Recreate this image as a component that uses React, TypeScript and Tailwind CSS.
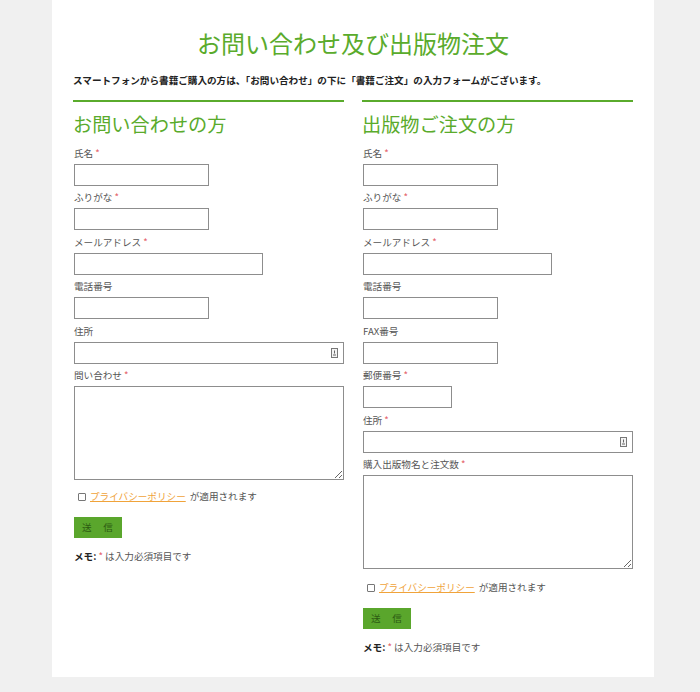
import React from 'react';

type Field = {
  label: string;
  required?: boolean;
  width?: string;
  icon?: boolean;
  textarea?: boolean;
};

const contactFields: Field[] = [
  { label: '氏名', required: true, width: 'w-[135px]' },
  { label: 'ふりがな', required: true, width: 'w-[135px]' },
  { label: 'メールアドレス', required: true, width: 'w-[189px]' },
  { label: '電話番号', width: 'w-[135px]' },
  { label: '住所', width: 'w-full', icon: true },
  { label: '問い合わせ', required: true, textarea: true },
];

const orderFields: Field[] = [
  { label: '氏名', required: true, width: 'w-[135px]' },
  { label: 'ふりがな', required: true, width: 'w-[135px]' },
  { label: 'メールアドレス', required: true, width: 'w-[189px]' },
  { label: '電話番号', width: 'w-[135px]' },
  { label: 'FAX番号', width: 'w-[135px]' },
  { label: '郵便番号', required: true, width: 'w-[89px]' },
  { label: '住所', required: true, width: 'w-full', icon: true },
  { label: '購入出版物名と注文数', required: true, textarea: true },
];

const ContactIcon = () => (
  <svg width="7" height="10" viewBox="0 0 7 10" className="absolute right-[6px] top-[6px]">
    <rect x="0.5" y="0.5" width="6" height="9" fill="#f4f4f4" stroke="#777" />
    <rect x="3" y="2.5" width="1" height="3" fill="#666" />
    <rect x="2" y="6.5" width="3" height="1" fill="#666" />
  </svg>
);

const FormField: React.FC<{ field: Field }> = ({ field }) => (
  <div className="mb-[3.5px]">
    <div className="text-[9.6px] leading-[17px] text-[#555]">
      {field.label}
      {field.required && <span className="text-[#e5636b]"> *</span>}
    </div>
    {field.textarea ? (
      <textarea className="mt-[2px] block h-[94px] w-full resize-y border border-[#8d8d8d] bg-white" />
    ) : (
      <div className={`relative mt-[2px] ${field.width}`}>
        <input type="text" className="block h-[22px] w-full border border-[#8d8d8d] bg-white" />
        {field.icon && <ContactIcon />}
      </div>
    )}
  </div>
);

const FormColumn: React.FC<{ title: string; fields: Field[]; gapAfter: string }> = ({
  title,
  fields,
  gapAfter,
}) => (
  <div className="border-t-2 border-[#5aab2c]">
    <h2 className="mt-[10px] text-[19.2px] leading-[24px] text-[#5aab2c]">{title}</h2>
    <div className="mt-[8.5px] pl-[1px]">
      {fields.map((f, i) => (
        <FormField key={i} field={f} />
      ))}
      <div className={`${gapAfter} flex items-center text-[9.6px] leading-[17px] text-[#555]`}>
        <span className="ml-[4px] mr-[4px] inline-block h-[8px] w-[8px] rounded-[1px] border border-[#777] bg-white" />
        <span className="text-[#f0a33a] underline">プライバシーポリシー</span>
        <span className="ml-[4px]">が適用されます</span>
      </div>
      <button className="mt-[11.5px] block h-[21px] w-[48px] bg-[#5aa62c] text-[9.6px] tracking-[1px] text-[#2c5a12]">
        送　信
      </button>
      <div className="mt-[10px] text-[9.6px] leading-[17px] text-[#555]">
        <span className="font-bold text-[#222]">メモ:</span>
        <span className="text-[#e5636b]"> *</span> は入力必須項目です
      </div>
    </div>
  </div>
);

export default function App() {
  return (
    <div
      className="min-h-screen bg-[#f0f0f0]"
      style={{ fontFamily: '"Noto Sans CJK JP", "Noto Sans", sans-serif' }}
    >
      <div className="ml-[52px] w-[602px] bg-white px-[21px] pt-[27px] pb-[21px]">
        <h1 className="text-center text-[24px] leading-[32px] text-[#5aab2c]">
          お問い合わせ及び出版物注文
        </h1>
        <p className="mt-[13px] text-[9.6px] font-bold leading-[16px] text-[#222]">
          スマートフォンから書籍ご購入の方は、「お問い合わせ」の下に「書籍ご注文」の入力フォームがございます。
        </p>
        <div className="mt-[12px] grid grid-cols-2 gap-[18px]">
          <FormColumn title="お問い合わせの方" fields={contactFields} gapAfter="mt-[8px]" />
          <FormColumn title="出版物ご注文の方" fields={orderFields} gapAfter="mt-[10px]" />
        </div>
      </div>
    </div>
  );
}
